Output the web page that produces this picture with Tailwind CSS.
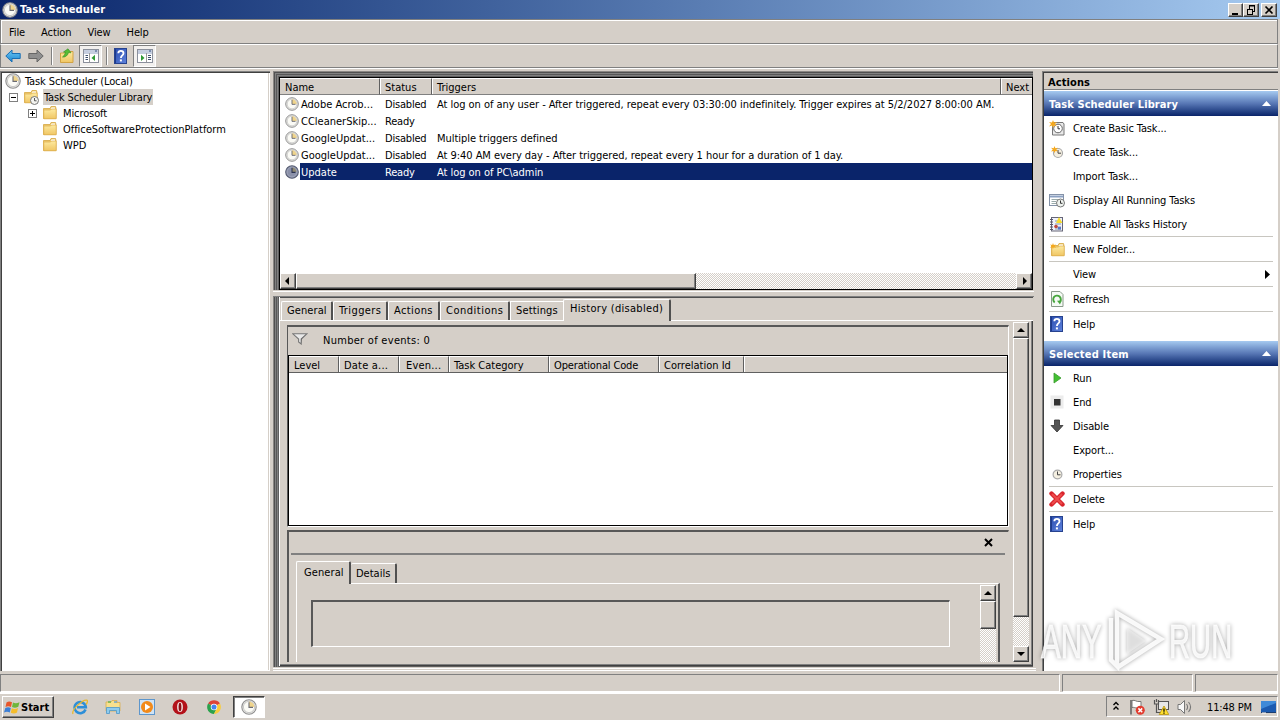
<!DOCTYPE html>
<html lang="en">
<head>
    <meta charset="UTF-8">
    <meta name="viewport" content="width=device-width, initial-scale=1.0">
    <title>Task Scheduler</title>
    <script src="https://cdn.jsdelivr.net/npm/@tailwindcss/browser@4"></script>
</head>
<body class="w-[1280px] h-[720px] overflow-hidden flex flex-col bg-[#d5cfc8] text-black text-[11px] leading-4 whitespace-nowrap cursor-default select-none font-['Tahoma','DejaVu_Sans_Condensed','DejaVu_Sans',sans-serif]">

    <!-- Icon sprites -->
    <svg class="absolute size-0">
        <defs>
            <linearGradient id="gFolder" x1="0" y1="0" x2="0" y2="1"><stop offset="0" stop-color="#fdeaa0"/><stop offset="1" stop-color="#f0c664"/></linearGradient>
            <linearGradient id="gHelp" x1="0" y1="0" x2="1" y2="1"><stop offset="0" stop-color="#2a4db0"/><stop offset="1" stop-color="#5f83dc"/></linearGradient>
            <linearGradient id="gBlue" x1="0" y1="0" x2="0" y2="1"><stop offset="0" stop-color="#6cc8f6"/><stop offset="1" stop-color="#1d86d0"/></linearGradient>
        </defs>
        <symbol id="clock" viewBox="0 0 16 16">
            <circle cx="8" cy="8" r="7.2" fill="#e9e9e6" stroke="#8e8e8e" stroke-width="1.1"/>
            <circle cx="8" cy="8" r="5.6" fill="#fbfbf6" stroke="#bdbdbd" stroke-width=".8"/>
            <path d="M8 8V2.6A5.4 5.4 0 0 1 13.4 8Z" fill="#efd48c"/>
            <path d="M8 3.2V8.4H12" fill="none" stroke="#6c6c74" stroke-width="1.1"/>
        </symbol>
        <symbol id="clockSel" viewBox="0 0 16 16">
            <circle cx="8" cy="8" r="7.2" fill="#8a90a8" stroke="#555b70" stroke-width="1.2"/>
            <path d="M8 8V2.6A5.4 5.4 0 0 1 13.4 8Z" fill="#8f8970"/>
            <circle cx="8" cy="8" r="5.6" fill="none" stroke="#a5abbe" stroke-width=".8"/>
            <path d="M8 3.2V8.4H12" fill="none" stroke="#2b3350" stroke-width="1.2"/>
        </symbol>
        <symbol id="folder" viewBox="0 0 16 16">
            <path d="M1.5 3.5H8L9 1.5H13.5L14 3.5V13.5H1.5Z" fill="#f0cc70" stroke="#d6a743" stroke-width=".8"/>
            <path d="M9.5 2.5H13V4H9Z" fill="#fff"/>
            <path d="M1.8 5H8.5L9.5 4H14.2V13.8H1.8Z" fill="url(#gFolder)" stroke="#dcae4d" stroke-width=".7"/>
        </symbol>
        <symbol id="help" viewBox="0 0 16 16">
            <rect x="1.5" y=".5" width="12" height="15" fill="url(#gHelp)" stroke="#27438f"/>
            <path d="M2.5 1V15" stroke="#1d3a8c" stroke-width="1"/>
            <path d="M5.3 5.2C5.3 2 10.5 2 10.5 5.2C10.5 7.4 7.9 7.4 7.9 10" fill="none" stroke="#fff" stroke-width="1.8"/>
            <rect x="6.9" y="11.4" width="2" height="2" fill="#fff"/>
        </symbol>
        <symbol id="paneLeft" viewBox="0 0 16 16">
            <rect x=".5" y="1.5" width="15" height="13" fill="#fff" stroke="#8b909c"/>
            <path d="M1 3H15M1 5H15" stroke="#8b9cc0"/><path d="M12 3H14" stroke="#35507f"/>
            <path d="M6.5 5V14" stroke="#9a9a9a"/>
            <path d="M2.5 7.5H5M2.5 9.5H5M2.5 11.5H5" stroke="#3f506e"/>
            <path d="M12 6.8V13L8.5 9.9Z" fill="#2f9a35"/>
        </symbol>
        <symbol id="paneRight" viewBox="0 0 16 16">
            <rect x=".5" y="1.5" width="15" height="13" fill="#fff" stroke="#8b909c"/>
            <path d="M1 3H15M1 5H15" stroke="#8b9cc0"/><path d="M12 3H14" stroke="#35507f"/>
            <path d="M9.5 5V14" stroke="#9a9a9a"/>
            <path d="M11 7.5H14M11 9.5H14M11 11.5H14" stroke="#3f506e"/>
            <path d="M4 6.8V13L7.5 9.9Z" fill="#2f9a35"/>
        </symbol>
        <symbol id="arrow" viewBox="0 0 16 14">
            <path d="M.8 7L7 1V4.5H15.2V9.5H7V13Z" stroke-width="1"/>
        </symbol>
        <symbol id="star" viewBox="0 0 8 8">
            <path d="M4 0L5 2.6L8 2L6 4L8 6.4L5 5.6L4 8L3 5.6L0 6.4L2 4L0 2L3 2.6Z" fill="#f5a81c"/>
        </symbol>
    </svg>

    <!-- Title bar -->
    <div class="h-[19px] shrink-0 flex items-center pl-0.5 pr-[3px] bg-linear-to-r from-[#0a246a] to-[#a6caf0]">
        <svg class="size-4 mt-px"><use href="#clock"/></svg>
        <span class="flex-1 ml-0.5 text-white font-bold tracking-[.1px]">Task Scheduler</span>
        <div class="flex">
            <div class="w-[15px] h-3.5 bg-[#d5cfc8] border border-t-white border-l-white border-r-[#404040] border-b-[#404040] shadow-[inset_-1px_-1px_0_#808080]">
                <svg class="size-3"><path d="M3 10H9" stroke="#000" stroke-width="2"/></svg>
            </div>
            <div class="w-4 h-3.5 bg-[#d5cfc8] border border-t-white border-l-white border-r-[#404040] border-b-[#404040] shadow-[inset_-1px_-1px_0_#808080]">
                <svg class="w-3.5 h-3"><path d="M5 2H11M5.5 2V5M10.5 2V7.5M8 7.5H11M3 5.5H9M3.5 5V10.5M8.5 5V10.5M3 10.5H9M5 1.5H11" fill="none" stroke="#000"/></svg>
            </div>
            <div class="ml-0.5 w-4 h-3.5 bg-[#d5cfc8] border border-t-white border-l-white border-r-[#404040] border-b-[#404040] shadow-[inset_-1px_-1px_0_#808080]">
                <svg class="w-3.5 h-3"><path d="M3.5 2.5L10.5 9.5M10.5 2.5L3.5 9.5" stroke="#000" stroke-width="1.7"/></svg>
            </div>
        </div>
    </div>

    <!-- Menu bar -->
    <div class="h-[25px] shrink-0 mr-[2px] pl-2 pt-0.5 flex items-center gap-4 tracking-[-.1px] border-t border-l border-[#808080] border-r shadow-[inset_1px_1px_0_#fff] [border-bottom:1px_solid_#808080]">
        <span>File</span><span>Action</span><span>View</span><span>Help</span>
    </div>

    <!-- Toolbar -->
    <div class="h-6 shrink-0 mr-[2px] pl-1 flex items-center border border-t-white border-l-[#808080] border-r-[#808080] border-b-[#808080] shadow-[0_1px_0_#fff]">
        <svg class="w-4 h-3.5"><use href="#arrow" fill="url(#gBlue)" stroke="#1a6fb4"/></svg>
        <svg class="w-4 h-3.5 ml-[7px]"><use href="#arrow" fill="#8f8f8f" stroke="#666" transform="matrix(-1 0 0 1 16 0)"/></svg>
        <div class="ml-[7px] w-0.5 h-[18px] border-l border-[#808080] bg-white"></div>
        <svg class="size-4 ml-[6px]" viewBox="0 0 16 16">
            <path d="M1.5 5H6L7 3.5H14V14.5H1.5Z" fill="url(#gFolder)" stroke="#d2a344"/>
            <path d="M3.5 9C5 8 6 6 6.5 4.5L4.5 4L9 .8L12 4.8L9.5 4.5C9 7 6.5 9.5 3.5 9Z" fill="#57bd35" stroke="#328a20" stroke-width=".6"/>
        </svg>
        <div class="ml-[4px] w-[23px] h-[22px] flex items-center justify-center bg-[#f2f0ee] border border-t-[#808080] border-l-[#808080] border-white">
            <svg class="size-4"><use href="#paneLeft"/></svg>
        </div>
        <div class="ml-1 w-0.5 h-[18px] border-l border-[#808080] bg-white"></div>
        <svg class="size-4 ml-[5px]"><use href="#help"/></svg>
        <div class="ml-[4px] w-[23px] h-[22px] flex items-center justify-center bg-[#f2f0ee] border border-t-[#808080] border-l-[#808080] border-white">
            <svg class="size-4"><use href="#paneRight"/></svg>
        </div>
    </div>

    <!-- Main area -->
    <div class="mt-[3px] h-[600px] shrink-0 flex">

        <!-- Console tree -->
        <div class="w-[270px] pl-0.5 pt-0.5 bg-white shadow-[inset_1px_1px_0_#808080,inset_2px_2px_0_#404040,inset_-1px_-1px_0_#fff,inset_-2px_-1px_0_#d5cfc8]">
            <div class="h-4 flex items-center pl-[3px]">
                <svg class="size-4"><use href="#clock"/></svg>
                <span class="ml-1 mt-0.5 tracking-[-.12px]">Task Scheduler (Local)</span>
            </div>
            <div class="h-4 flex items-center pl-[7px]">
                <svg class="size-[9px]"><rect x=".5" y=".5" width="8" height="8" fill="#fff" stroke="#808080"/><path d="M2 4.5H7" stroke="#000"/></svg>
                <svg class="size-4 ml-[5px]" viewBox="0 0 16 16"><use href="#folder"/><circle cx="11.5" cy="11.5" r="4" fill="#f4f4f0" stroke="#777"/><path d="M11.5 9V11.8H13.5" fill="none" stroke="#444" stroke-width=".9"/></svg>
                <span class="ml-[4px] h-4 pt-px px-px bg-[#d5cfc8] tracking-[-.15px]">Task Scheduler Library</span>
            </div>
            <div class="h-4 flex items-center pl-[26px]">
                <svg class="size-[9px]"><rect x=".5" y=".5" width="8" height="8" fill="#fff" stroke="#808080"/><path d="M2 4.5H7M4.5 2V7" stroke="#000"/></svg>
                <svg class="size-4 ml-[5px]"><use href="#folder"/></svg>
                <span class="ml-[5px] mt-0.5 tracking-[-.1px]">Microsoft</span>
            </div>
            <div class="h-4 flex items-center pl-10">
                <svg class="size-4"><use href="#folder"/></svg>
                <span class="ml-[5px] mt-0.5 tracking-[-.05px]">OfficeSoftwareProtectionPlatform</span>
            </div>
            <div class="h-4 flex items-center pl-10">
                <svg class="size-4"><use href="#folder"/></svg>
                <span class="ml-[5px] mt-0.5">WPD</span>
            </div>
        </div>

        <!-- Task list and details -->
        <div class="ml-[3px] w-[769px] flex flex-col">
            <div class="w-[760px] h-[219px] pl-[6px] pt-[6px] shadow-[inset_1px_1px_0_#8a8784,inset_2px_2px_0_#505050,inset_3px_3px_0_#808080,inset_4px_4px_0_#585858,inset_5px_5px_0_#808080,inset_6px_6px_0_#606060]">
                <div class="h-[213px] flex flex-col border border-black bg-white">
                    <div class="h-[17px] flex bg-[#d5cfc8]">
                        <span class="w-[100px] pl-[5px] pt-px border-t border-white border-r border-r-[#606060] border-b border-b-[#808080]">Name</span>
                        <span class="w-[52px] pl-[5px] pt-px border-t border-white border-r border-r-[#606060] border-b border-b-[#808080] shadow-[inset_1px_0_0_#fff]">Status</span>
                        <span class="w-[569px] pl-[5px] pt-px border-t border-white border-r border-r-[#606060] border-b border-b-[#808080] shadow-[inset_1px_0_0_#fff]">Triggers</span>
                        <span class="flex-1 pl-[5px] pt-px border-t border-white border-b border-b-[#808080] shadow-[inset_1px_0_0_#fff]">Next</span>
                    </div>
                    <div id="tasks" class="flex-1"></div>
                    <div class="h-4 flex bg-[repeating-conic-gradient(#fff_0_25%,#d5cfc8_0_50%)] bg-[length:2px_2px]">
                        <div class="w-4 bg-[#d5cfc8] border border-t-white border-l-white border-r-[#404040] border-b-[#404040] shadow-[inset_-1px_-1px_0_#808080]">
                            <svg class="size-3.5"><path d="M8 3V11L4 7Z"/></svg>
                        </div>
                        <div class="w-[400px] bg-[#d5cfc8] border border-t-white border-l-white border-r-[#404040] border-b-[#404040] shadow-[inset_-1px_-1px_0_#808080]"></div>
                        <div class="ml-auto w-4 bg-[#d5cfc8] border border-t-white border-l-white border-r-[#404040] border-b-[#404040] shadow-[inset_-1px_-1px_0_#808080]">
                            <svg class="size-3.5"><path d="M6 3V11L10 7Z"/></svg>
                        </div>
                    </div>
                </div>
            </div>
            <div class="h-[7px] w-[761px] flex flex-col gap-[3px] pt-px border-b border-[#808080]"><div class="h-px bg-white"></div></div>

            <div class="h-[370px] w-[760px] pl-[6px] shadow-[inset_1px_0_0_#8a8784,inset_2px_0_0_#505050,inset_3px_0_0_#808080,inset_4px_0_0_#585858,inset_5px_0_0_#808080,inset_0_1px_0_#505050,inset_6px_-1px_0_#606060]">
                <!-- Tabs -->
                <div class="h-6 flex items-end pl-0.5 shadow-[inset_0_-1px_0_#fff,inset_1px_0_0_#fff]">
                    <span class="w-[52px] h-[19px] mb-px pl-[5px] pt-px border-t border-l border-white border-r-2 border-r-[#505050] rounded-t-xs tracking-[.1px]">General</span>
                    <span class="w-[55px] h-[19px] mb-px pl-[5px] pt-px border-t border-l border-white border-r-2 border-r-[#505050] rounded-t-xs tracking-[.4px]">Triggers</span>
                    <span class="w-[52px] h-[19px] mb-px pl-[5px] pt-px border-t border-l border-white border-r-2 border-r-[#505050] rounded-t-xs tracking-[.4px]">Actions</span>
                    <span class="w-[70px] h-[19px] mb-px pl-[5px] pt-px border-t border-l border-white border-r-2 border-r-[#505050] rounded-t-xs tracking-[.5px]">Conditions</span>
                    <span class="w-[53px] h-[19px] mb-px pl-[5px] pt-px border-t border-l border-white tracking-[.15px]">Settings</span>
                    <span class="w-[108px] h-[22px] pl-[6px] pt-px bg-[#d5cfc8] border-t border-l border-white border-r-2 border-r-[#505050] rounded-t-xs tracking-[.3px]">History (disabled)</span>
                </div>
                <div class="h-[345px] w-[754px] flex pl-2 pt-px shadow-[inset_1px_0_0_#fff,inset_-1px_-1px_0_#404040,inset_-2px_-2px_0_#808080]">
                    <div class="w-[722px] h-[340px] pt-[3px] flex flex-col">
                        <div class="h-[202px] shrink-0 border-t-2 border-l border-[#585858] border-b border-b-white border-r border-r-white">
                            <div class="h-7 flex items-center pl-1">
                                <svg class="w-4 h-3 mb-1" viewBox="0 0 16 12"><path d="M.8 .8H14.8L9.2 6V11L6.6 9V6Z" fill="#e8e8e8" stroke="#777" stroke-width="1.1"/><path d="M9 6V11L9.6 6L14.5 1Z" fill="#555"/></svg>
                                <span class="ml-[15px] tracking-[.28px]">Number of events: 0</span>
                            </div>
                            <div class="h-[171px] border border-black bg-white">
                                <div class="h-[17px] flex bg-[#d5cfc8] border-b border-[#606060]">
                                    <span class="w-[50px] pl-[5px] pt-px border-t border-t-white border-r border-[#606060]">Level</span>
                                    <span class="w-[60px] pl-[5px] pt-px border-t border-t-white border-r border-[#606060] shadow-[inset_1px_0_0_#fff] tracking-[.2px]">Date a...</span>
                                    <span class="w-[50px] pl-[7px] pt-px border-t border-t-white border-r border-[#606060] shadow-[inset_1px_0_0_#fff] tracking-[.2px]">Even...</span>
                                    <span class="w-[100px] pl-[5px] pt-px border-t border-t-white border-r border-[#606060] shadow-[inset_1px_0_0_#fff]">Task Category</span>
                                    <span class="w-[110px] pl-[5px] pt-px border-t border-t-white border-r border-[#606060] shadow-[inset_1px_0_0_#fff] tracking-[-.15px]">Operational Code</span>
                                    <span class="w-[85px] pl-[5px] pt-px border-t border-t-white border-r border-[#606060] shadow-[inset_1px_0_0_#fff]">Correlation Id</span>
                                    <span class="flex-1 border-t border-t-white shadow-[inset_1px_0_0_#fff]"></span>
                                </div>
                            </div>
                        </div>
                        <!-- Event preview -->
                        <div class="mt-[3px] flex-1 flex flex-col border-t-2 border-l-2 border-[#585858] border-r border-r-[#d5cfc8]">
                            <div class="h-[23px] ml-0.5 mr-[3px] pr-3 flex items-center justify-end border-b-2 border-[#808080]">
                                <svg class="size-[9px]"><path d="M1 1L8 8M8 1L1 8" stroke="#000" stroke-width="2"/></svg>
                            </div>
                            <div class="h-7 ml-[7px] pt-[5px] flex items-end">
                                <span class="w-[55px] h-[23px] pl-[7px] pt-[3px] relative top-px bg-[#d5cfc8] border-t border-l border-white border-r-2 border-r-[#505050] rounded-t-xs tracking-[.1px]">General</span>
                                <span class="w-[46px] h-5 pl-[5px] pt-0.5 border-t border-white border-r-2 border-r-[#505050] rounded-t-xs">Details</span>
                            </div>
                            <div class="flex-1 ml-[7px] w-[704px] flex border-t border-l border-white border-r-2 border-r-[#585858]">
                                <div class="mt-4 ml-[14px] w-[639px] h-[47px] border-t-2 border-l-2 border-[#585858] border-r border-b border-r-white border-b-white"></div>
                                <div class="mt-px ml-[30px] w-4 bg-[repeating-conic-gradient(#fff_0_25%,#d5cfc8_0_50%)] bg-[length:2px_2px]">
                                    <div class="h-4 bg-[#d5cfc8] border border-t-white border-l-white border-r-[#404040] border-b-[#404040] shadow-[inset_-1px_-1px_0_#808080]">
                                        <svg class="size-3.5"><path d="M3 9H11L7 5Z"/></svg>
                                    </div>
                                    <div class="h-7 bg-[#d5cfc8] border border-t-white border-l-white border-r-[#404040] border-b-[#404040] shadow-[inset_-1px_-1px_0_#808080]"></div>
                                </div>
                            </div>
                        </div>
                    </div>
                    <div class="ml-1 w-4 h-[340px] flex flex-col bg-[repeating-conic-gradient(#fff_0_25%,#d5cfc8_0_50%)] bg-[length:2px_2px]">
                        <div class="h-4 bg-[#d5cfc8] border border-t-white border-l-white border-r-[#404040] border-b-[#404040] shadow-[inset_-1px_-1px_0_#808080]">
                            <svg class="size-3.5"><path d="M3 9H11L7 5Z"/></svg>
                        </div>
                        <div class="h-[279px] bg-[#d5cfc8] border border-t-white border-l-white border-r-[#404040] border-b-[#404040] shadow-[inset_-1px_-1px_0_#808080]"></div>
                        <div class="mt-auto h-4 bg-[#d5cfc8] border border-t-white border-l-white border-r-[#404040] border-b-[#404040] shadow-[inset_-1px_-1px_0_#808080]">
                            <svg class="size-3.5"><path d="M3 5H11L7 9Z"/></svg>
                        </div>
                    </div>
                </div>
            </div>
            <div class="w-[763px] h-1 flex flex-col justify-between pt-px"><div class="h-px bg-white"></div><div class="h-px bg-white"></div></div>
        </div>

        <!-- Actions pane -->
        <div class="w-[236px] pl-0.5 pt-0.5 flex flex-col bg-white shadow-[inset_1px_1px_0_#808080,inset_2px_2px_0_#404040]">
            <div class="h-[17px] shrink-0 pl-1 pt-0.5 font-bold bg-[#d5cfc8] border-b border-[#808080] tracking-[.1px]">Actions</div>
            <div class="h-[25px] mt-px shrink-0 flex items-center justify-between pl-[5px] pr-[7px] text-white font-bold bg-linear-to-b from-[#a6caf0] via-[#5877b5] to-[#0a246a]">
                <span class="mt-0.5 tracking-[.1px]">Task Scheduler Library</span>
                <svg class="w-[9px] h-[5px]"><path d="M0 5L4.5 0L9 5Z" fill="#fff"/></svg>
            </div>
            <div id="libraryActions"></div>
            <div class="h-[25px] mt-[5px] shrink-0 flex items-center justify-between pl-[5px] pr-[7px] text-white font-bold bg-linear-to-b from-[#a6caf0] via-[#5877b5] to-[#0a246a]">
                <span class="mt-0.5 tracking-[.2px]">Selected Item</span>
                <svg class="w-[9px] h-[5px]"><path d="M0 5L4.5 0L9 5Z" fill="#fff"/></svg>
            </div>
            <div id="itemActions"></div>
        </div>
    </div>

    <!-- Status bar -->
    <div class="mt-[3px] h-[18px] shrink-0 mr-0.5 flex gap-0.5 shadow-[0_2px_0_#fff]">
        <div class="w-[1060px] border border-t-[#808080] border-l-[#808080] border-white"></div>
        <div class="w-[131px] border border-t-[#808080] border-l-[#808080] border-white"></div>
        <div class="flex-1 border border-t-[#808080] border-l-[#808080] border-white"></div>
    </div>

    <!-- Taskbar -->
    <div class="flex-1 mt-1 pl-0.5 flex items-start">
        <div class="w-[52px] h-[22px] flex items-center pl-px bg-[#d5cfc8] border border-t-white border-l-white border-r-[#404040] border-b-[#404040] shadow-[inset_-1px_-1px_0_#808080]">
            <svg class="w-4 h-[15px] shrink-0" viewBox="0 0 16 15">
                <path d="M2.5 2.5C4.5 1 6 1.2 8 2.2L7 7C5 6 3.5 6 1.5 7Z" fill="#e8562a"/>
                <path d="M9 2.5C11 3.6 13 3.4 15.5 2.2L14.3 6.8C12 8 10 8 8 7Z" fill="#6fb63c"/>
                <path d="M1.3 8C3.3 7 5 7 6.8 8L5.8 12.6C4 11.6 2 11.6 0 12.6Z" fill="#3c7fd6"/>
                <path d="M7.8 8.2C10 9.3 12 9 14 8L13 12.6C11 13.8 9 13.8 6.8 12.8Z" fill="#f5bd2b"/>
            </svg>
            <span class="ml-px mt-px font-bold text-[11px]">Start</span>
        </div>
        <svg class="size-4 ml-[18px] mt-[3px]" viewBox="0 0 16 16">
            <path d="M13.5 10.5A5.6 5.6 0 1 1 13.8 8.2H5" fill="none" stroke="#2d8fd8" stroke-width="2.6"/>
            <path d="M1 15C-1 11 11 0 15 1.2C16 2 15 4.5 14 5.5" fill="none" stroke="#e9b92e" stroke-width="1.3"/>
        </svg>
        <svg class="size-4 ml-[17px] mt-[3px]" viewBox="0 0 16 16">
            <path d="M1 3H6L7 1.5H12V3.5H15V12H1Z" fill="#f7e08e" stroke="#d9ae4f" stroke-width=".8"/>
            <path d="M3 3H6" stroke="#4eae46" stroke-width="1.2"/><path d="M9 3H12" stroke="#4b93d6" stroke-width="1.2"/>
            <path d="M1.5 14.5V8.5H14.5V14.5H11.5V11.5H4.5V14.5Z" fill="#8ecbee" stroke="#4d97c9" stroke-width=".8"/>
        </svg>
        <svg class="size-4 ml-[18px] mt-[3px]" viewBox="0 0 16 16">
            <rect x=".5" y=".5" width="15" height="15" fill="#cfe3f5" stroke="#5d96cc"/>
            <circle cx="8" cy="8" r="6" fill="#f28a1a"/><path d="M6 4.5V11.5L11.5 8Z" fill="#fff"/>
        </svg>
        <svg class="size-4 ml-[17px] mt-[3px]" viewBox="0 0 16 16">
            <circle cx="8" cy="8" r="7.5" fill="#b3121a"/><ellipse cx="8" cy="8" rx="2.9" ry="5" fill="#f3e4e4"/><ellipse cx="8" cy="8" rx="1.4" ry="4.3" fill="#8f0d14"/>
        </svg>
        <svg class="size-3.5 ml-[19px] mt-1" viewBox="0 0 16 16">
            <path d="M8 8L1.2 4A8 8 0 0 1 14.8 4Z" fill="#dd4437"/>
            <path d="M8 8L1.2 4A8 8 0 0 0 8 16L11 10Z" fill="#2ba24c"/>
            <path d="M8 8L14.8 4A8 8 0 0 1 8 16L11 10Z" fill="#f9cd3c"/>
            <circle cx="8" cy="8" r="3.7" fill="#fff"/><circle cx="8" cy="8" r="2.9" fill="#4485ee"/>
        </svg>
        <div class="ml-3 w-8 h-[22px] flex items-center justify-center bg-white border border-t-[#404040] border-l-[#404040] border-white shadow-[inset_1px_1px_0_#808080]">
            <svg class="size-4"><use href="#clock"/></svg>
        </div>
        <!-- Tray -->
        <div class="ml-auto mr-0.5 w-[172px] h-[21px] flex items-center pl-[6px] border border-t-[#808080] border-l-[#808080] border-white">
            <svg class="w-[7px] h-2.5 mb-0.5"><path d="M.5 4L3 1.5L5.5 4M.5 8.5L3 6L5.5 8.5" fill="none" stroke="#000" stroke-width="1.4"/></svg>
            <svg class="size-4 ml-[9px]" viewBox="0 0 16 16">
                <path d="M2 1V15.5" stroke="#666" stroke-width="1.6"/>
                <path d="M3 1.5C6 .5 7.5 3 10 2.5H12V9H8C6 9 5 8 3 8.5Z" fill="#fff" stroke="#777"/>
                <circle cx="11.3" cy="11.3" r="4.5" fill="#e23b2e"/><path d="M9.4 9.4L13.2 13.2M13.2 9.4L9.4 13.2" stroke="#fff" stroke-width="1.5"/>
            </svg>
            <svg class="size-4 ml-2" viewBox="0 0 16 16">
                <rect x="5.5" y="2.5" width="10" height="8" fill="#e8e8e8" stroke="#555"/>
                <path d="M1.5 1V5H5.5V1M3.5 0V3M3.5 5V13.5H8" fill="none" stroke="#555" stroke-width="1.2"/>
                <path d="M11 7L15.8 15.5H6.2Z" fill="#ffdf2e" stroke="#b58c00" stroke-width=".7"/><path d="M11 9.5V12.8M11 13.6V14.8" stroke="#000" stroke-width="1.2"/>
            </svg>
            <svg class="size-4 ml-2" viewBox="0 0 16 16">
                <path d="M1 5.5H3.5L7.5 1.5V14.5L3.5 10.5H1Z" fill="#f8f8f8" stroke="#777"/>
                <path d="M9.5 5C10.8 6.8 10.8 9.2 9.5 11M11.5 3C14 6 14 10 11.5 13" fill="none" stroke="#777" stroke-width="1.1"/>
            </svg>
            <span class="ml-[14px] mt-0.5 tracking-[-.15px]">11:48 PM</span>
            <svg class="w-[15px] h-[13px] ml-auto mr-px mt-0.5" viewBox="0 0 15 13"><rect width="15" height="11" fill="#1c5bb0"/><path d="M0 0H15V2L0 8Z" fill="#3f8ad8"/><path d="M0 11.5H15" stroke="#1b3d70"/><path d="M1 12H5" stroke="#fff"/></svg>
        </div>
    </div>

    <!-- Watermark -->
    <svg class="absolute left-[1036px] top-[604px] w-[204px] h-[74px] pointer-events-none drop-shadow-[0_0_2px_rgba(0,0,0,.4)]" viewBox="0 0 204 74">
        <g fill="#fff" fill-opacity=".85" stroke="#fff" stroke-opacity=".7" font-family="Liberation Sans" font-size="49">
            <text transform="translate(5 54) scale(.62 1)" textLength="98" lengthAdjust="spacingAndGlyphs">ANY</text>
            <text transform="translate(133 54) scale(.62 1)" textLength="102" lengthAdjust="spacingAndGlyphs">RUN</text>
        </g>
        <path d="M75 14V56L81 62V9L125 35L82 63" fill="none" stroke="#fff" stroke-opacity=".9" stroke-width="4.5"/>
        <path d="M91 24V50L110 37Z" fill="#eee" fill-opacity=".7"/>
    </svg>

    <script>
        const tasks = [
            ["Adobe Acrob...", "Disabled", "At log on of any user - After triggered, repeat every 03:30:00 indefinitely. Trigger expires at 5/2/2027 8:00:00 AM."],
            ["CCleanerSkip...", "Ready", ""],
            ["GoogleUpdat...", "Disabled", "Multiple triggers defined"],
            ["GoogleUpdat...", "Disabled", "At 9:40 AM every day - After triggered, repeat every 1 hour for a duration of 1 day."],
            ["Update", "Ready", "At log on of PC\\admin"]
        ];

        document.getElementById('tasks').innerHTML = tasks.map(([name, status, trigger]) => {
            const selected = name === "Update";
            return `
                <div class="h-[17px] flex items-center pl-[5px]">
                    <svg class="size-3.5"><use href="${selected ? '#clockSel' : '#clock'}"/></svg>
                    <div class="ml-px flex-1 h-[17px] pt-0.5 flex items-center pl-px ${selected ? 'bg-[#0a246a] text-white' : ''}">
                        <span class="w-[84px]">${name}</span>
                        <span class="w-[52px] tracking-[-.2px]">${status}</span>
                        <span class="tracking-[-.04px]">${trigger}</span>
                    </div>
                </div>`;
        }).join('');

        const icons = {
            basic: '<path d="M3.5 2.5H14L15 4V15H3.5Z" fill="#e9e9e9" stroke="#777"/><circle cx="9" cy="8.5" r="4.3" fill="#fff" stroke="#666"/><path d="M9 6V8.8H11" fill="none" stroke="#333"/><use href="#star" width="8" height="8"/>',
            create: '<circle cx="9" cy="9" r="4.5" fill="#f5efe0" stroke="#a9a9a9" stroke-width="1.2"/><path d="M9 6V9.2H12" fill="none" stroke="#444"/><use href="#star" x="2" y="2" width="7" height="7"/>',
            running: '<rect x=".5" y="2.5" width="14" height="11" fill="#fff" stroke="#8492a8"/><path d="M1 4.5H14" stroke="#8ba0c2" stroke-width="2"/><path d="M2.5 7.5H9M2.5 9.5H7M2.5 11.5H7" stroke="#9aa"/><circle cx="11.5" cy="11" r="4" fill="#eef2ee" stroke="#777"/><path d="M11.5 8.5V11.3H13.5" fill="none" stroke="#333"/>',
            history: '<rect x="2.5" y="1.5" width="11" height="13.5" fill="#eef0fa" stroke="#667"/><path d="M1 3.5H4M1 6H4M1 8.5H4M1 11H4M1 13.5H4" stroke="#556"/><path d="M6 5H9M6 8H12M6 11H12M6 13H12" stroke="#89a"/><path d="M10 1L13.5 7H7Z" fill="#f6dc2e"/><circle cx="7" cy="10.5" r="1.8" fill="#c2473c"/><rect x="9" y="11" width="3" height="2.5" fill="#5778c8"/>',
            newFolder: '<g transform="translate(1 1)"><use href="#folder" width="16" height="16"/></g><use href="#star" x="1" y="2" width="6" height="6"/>',
            refresh: '<path d="M2.5 .5H11L14 3.5V15.5H2.5Z" fill="#f5faf5" stroke="#8a9a8a"/><path d="M5.7 11.4A3.8 3.8 0 1 1 10.8 11" fill="none" stroke="#46a63c" stroke-width="1.9"/><path d="M8 9.8L12.6 9.6L11 13.6Z" fill="#46a63c"/>',
            help: '<use href="#help" width="16" height="16"/>',
            run: '<path d="M5 3L12 8L5 13Z" fill="#43c032" stroke="#3a9a2e" stroke-width=".8"/>',
            end: '<rect x="1.5" y="1.5" width="13" height="13" fill="#ececec"/><rect x="5" y="5" width="6.5" height="6.5" fill="#333"/>',
            disable: '<path d="M5.5 2H10.5V7.5H14L8 14L2 7.5H5.5Z" fill="#555" stroke="#333" stroke-width=".8"/>',
            properties: '<circle cx="8.5" cy="8.5" r="4.4" fill="#f5f0e2" stroke="#aaa" stroke-width="1.2"/><path d="M8.5 5.5V8.8H11.5" fill="none" stroke="#444"/>',
            remove: '<path d="M2.5 2.5L13.5 13.5M13.5 2.5L2.5 13.5" stroke="#d8242c" stroke-width="4.4" stroke-linecap="round"/><path d="M3 3L13 13M13 3L3 13" stroke="#ee4c4c" stroke-width="2"/>'
        };

        const separator = '<div class="h-px ml-[5px] mr-[5px] bg-[#c8c6c0]"></div>';

        function renderActions(id, groups) {
            document.getElementById(id).innerHTML = groups.map(group => group.map(([icon, label]) => `
                <div class="h-6 flex items-center pl-[5px] pr-2">
                    <svg class="size-4" viewBox="0 0 16 16">${icons[icon] || ''}</svg>
                    <span class="ml-2 mt-0.5 flex-1 tracking-[-.12px]">${label}</span>
                    ${label === 'View' ? '<svg class="w-[5px] h-[9px]"><path d="M0 0V9L5 4.5Z"/></svg>' : ''}
                </div>`).join('')).join(separator);
        }

        renderActions('libraryActions', [
            [['basic', 'Create Basic Task...'], ['create', 'Create Task...'], ['', 'Import Task...'], ['running', 'Display All Running Tasks'], ['history', 'Enable All Tasks History']],
            [['newFolder', 'New Folder...']],
            [['', 'View']],
            [['refresh', 'Refresh']],
            [['help', 'Help']]
        ]);
        renderActions('itemActions', [
            [['run', 'Run'], ['end', 'End'], ['disable', 'Disable'], ['', 'Export...'], ['properties', 'Properties']],
            [['remove', 'Delete']],
            [['help', 'Help']]
        ]);
    </script>
</body>
</html>
